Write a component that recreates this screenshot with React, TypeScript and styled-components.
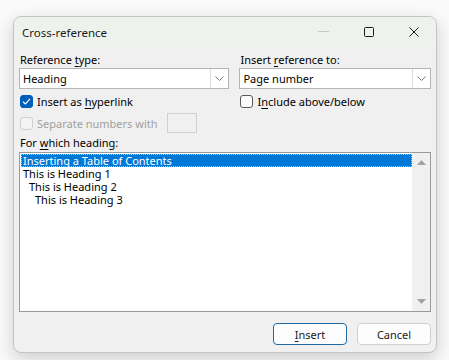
import React from "react";
import styled, { createGlobalStyle } from "styled-components";

const Global = createGlobalStyle`
  html, body { margin: 0; padding: 0; background: #f9f9f9; }
  body { font-family: "Segoe UI", "Noto Sans", sans-serif; font-size: 11px; color: #000; }
`;

const Page = styled.div`
  width: 449px;
  height: 360px;
  padding: 16px 0 0 13px;
  box-sizing: border-box;
  background: #fafafa;
`;

const Dialog = styled.div`
  width: 424px;
  height: 337px;
  box-sizing: border-box;
  border-radius: 8px;
  border: 1px solid #c4c4c4;
  background: #f0f0f0;
  box-shadow: 0 6px 18px rgba(0, 0, 0, 0.18);
  overflow: hidden;
  display: flex;
  flex-direction: column;
`;

const TitleBar = styled.div`
  height: 29px;
  flex: none;
  display: flex;
  align-items: center;
  padding-left: 8px;
  background: #eef2ec;
  font-size: 11.5px;
  color: #1a1a1a;
`;

const Title = styled.span`
  flex: 1;
  padding-top: 1px;
`;

const WinButton = styled.div`
  width: 45px;
  height: 29px;
  display: flex;
  align-items: center;
  justify-content: center;
`;

const Body = styled.div`
  flex: 1;
  padding: 0 5px 0 5px;
  display: flex;
  flex-direction: column;
`;

const Columns = styled.div`
  display: flex;
  gap: 10px;
`;

const Column = styled.div<{ $w: number }>`
  width: ${(p) => p.$w}px;
  display: flex;
  flex-direction: column;
`;

const Label = styled.div<{ $mt: number }>`
  height: 14px;
  line-height: 14px;
  margin-top: ${(p) => p.$mt}px;
  margin-left: 1px;
  white-space: nowrap;
`;

const U = styled.span`
  text-decoration: underline;
  text-underline-offset: 2px;
`;

const Combo = styled.div`
  margin-top: 1px;
  height: 21px;
  box-sizing: border-box;
  border: 1px solid #b4b4b4;
  background: #fff;
  display: flex;
  align-items: stretch;
`;

const ComboText = styled.div`
  flex: 1;
  padding-left: 3px;
  line-height: 19px;
`;

const ComboButton = styled.div`
  width: 17px;
  border-left: 1px solid #dcdcdc;
  display: flex;
  align-items: center;
  justify-content: center;
`;

const CheckRow = styled.div<{ $mt: number; $disabled?: boolean }>`
  margin-top: ${(p) => p.$mt}px;
  display: flex;
  align-items: center;
  gap: 4px;
  height: 20px;
  padding-left: 1px;
  white-space: nowrap;
  color: ${(p) => (p.$disabled ? "#a0a0a0" : "#000")};
`;

const Box = styled.div<{ $checked?: boolean; $disabled?: boolean }>`
  width: 13px;
  height: 13px;
  box-sizing: border-box;
  border-radius: 3px;
  border: 1px solid
    ${(p) => (p.$checked ? "#005fb8" : p.$disabled ? "#d0d0d0" : "#5a5a5a")};
  background: ${(p) => (p.$checked ? "#005fb8" : p.$disabled ? "#f3f3f3" : "#fbfbfb")};
  display: flex;
  align-items: center;
  justify-content: center;
`;

const SmallInput = styled.div`
  width: 30px;
  height: 20px;
  box-sizing: border-box;
  margin-left: 6px;
  border: 1px solid #cfcfcf;
  background: #f0f0f0;
`;

const ListBox = styled.div`
  margin-top: 2px;
  height: 160px;
  box-sizing: border-box;
  border: 1px solid #9a9a9a;
  background: #fff;
  display: flex;
`;

const ListItems = styled.div`
  flex: 1;
  padding-top: 1px;
  padding-left: 1px;
`;

const Item = styled.div<{ $level: number; $selected?: boolean }>`
  height: 13px;
  line-height: 13px;
  padding-left: ${(p) => 2 + p.$level * 6}px;
  white-space: nowrap;
  box-sizing: border-box;
  background: ${(p) => (p.$selected ? "#0078d7" : "transparent")};
  color: ${(p) => (p.$selected ? "#fff" : "#000")};
  outline: ${(p) => (p.$selected ? "1px dotted #9cc7f0" : "none")};
  outline-offset: -1px;
`;

const ScrollBar = styled.div`
  width: 18px;
  background: #f0f0f0;
  display: flex;
  flex-direction: column;
  justify-content: space-between;
  align-items: center;
  padding: 7px 0 7px;
`;

const Footer = styled.div`
  margin-top: 11px;
  display: flex;
  justify-content: flex-end;
  gap: 10px;
`;

const Button = styled.div<{ $primary?: boolean }>`
  width: 74px;
  height: 22px;
  box-sizing: border-box;
  border-radius: 4px;
  border: 1px solid ${(p) => (p.$primary ? "#1f6aa5" : "#d0d0d0")};
  background: #fdfdfd;
  display: flex;
  align-items: center;
  justify-content: center;
  color: #1a1a1a;
`;

const Chevron = () => (
  <svg width="9" height="5" viewBox="0 0 9 5">
    <path d="M0.5 0.5 L4.5 4.5 L8.5 0.5" fill="none" stroke="#7a7a7a" strokeWidth="1" />
  </svg>
);

const Check = () => (
  <svg width="9" height="9" viewBox="0 0 9 9">
    <path d="M1 4.8 L3.4 7 L8 1.8" fill="none" stroke="#fff" strokeWidth="1.2" />
  </svg>
);

export default function App() {
  return (
    <>
      <Global />
      <Page>
        <Dialog>
          <TitleBar>
            <Title>Cross-reference</Title>
            <WinButton>
              <svg width="11" height="1" viewBox="0 0 11 1">
                <rect width="11" height="1" fill="#c8c8c8" />
              </svg>
            </WinButton>
            <WinButton>
              <svg width="10" height="10" viewBox="0 0 10 10">
                <rect x="0.5" y="0.5" width="9" height="9" rx="1" fill="none" stroke="#1a1a1a" strokeWidth="1" />
              </svg>
            </WinButton>
            <WinButton>
              <svg width="10" height="10" viewBox="0 0 10 10">
                <path d="M0.5 0.5 L9.5 9.5 M9.5 0.5 L0.5 9.5" stroke="#1a1a1a" strokeWidth="1" />
              </svg>
            </WinButton>
          </TitleBar>
          <Body>
            <Columns>
              <Column $w={211}>
                <Label $mt={7}>
                  Reference <U>t</U>ype:
                </Label>
                <Combo>
                  <ComboText>Heading</ComboText>
                  <ComboButton>
                    <Chevron />
                  </ComboButton>
                </Combo>
                <CheckRow $mt={2}>
                  <Box $checked>
                    <Check />
                  </Box>
                  <span>
                    Insert as <U>h</U>yperlink
                  </span>
                </CheckRow>
                <CheckRow $mt={2} $disabled>
                  <Box $disabled />
                  <span>Separate numbers with</span>
                  <SmallInput />
                </CheckRow>
              </Column>
              <Column $w={192}>
                <Label $mt={7}>
                  Insert <U>r</U>eference to:
                </Label>
                <Combo>
                  <ComboText>Page number</ComboText>
                  <ComboButton>
                    <Chevron />
                  </ComboButton>
                </Combo>
                <CheckRow $mt={2}>
                  <Box />
                  <span>
                    I<U>n</U>clude above/below
                  </span>
                </CheckRow>
              </Column>
            </Columns>
            <Label $mt={3}>
              For <U>w</U>hich heading:
            </Label>
            <ListBox>
              <ListItems>
                <Item $level={0} $selected>
                  Inserting a Table of Contents
                </Item>
                <Item $level={0}>This is Heading 1</Item>
                <Item $level={1}>This is Heading 2</Item>
                <Item $level={2}>This is Heading 3</Item>
              </ListItems>
              <ScrollBar>
                <svg width="9" height="5" viewBox="0 0 9 5">
                  <path d="M0 5 L4.5 0 L9 5 Z" fill="#a3a3a3" />
                </svg>
                <svg width="9" height="5" viewBox="0 0 9 5">
                  <path d="M0 0 L4.5 5 L9 0 Z" fill="#a3a3a3" />
                </svg>
              </ScrollBar>
            </ListBox>
            <Footer>
              <Button $primary>
                <span>
                  <U>I</U>nsert
                </span>
              </Button>
              <Button>Cancel</Button>
            </Footer>
          </Body>
        </Dialog>
      </Page>
    </>
  );
}
